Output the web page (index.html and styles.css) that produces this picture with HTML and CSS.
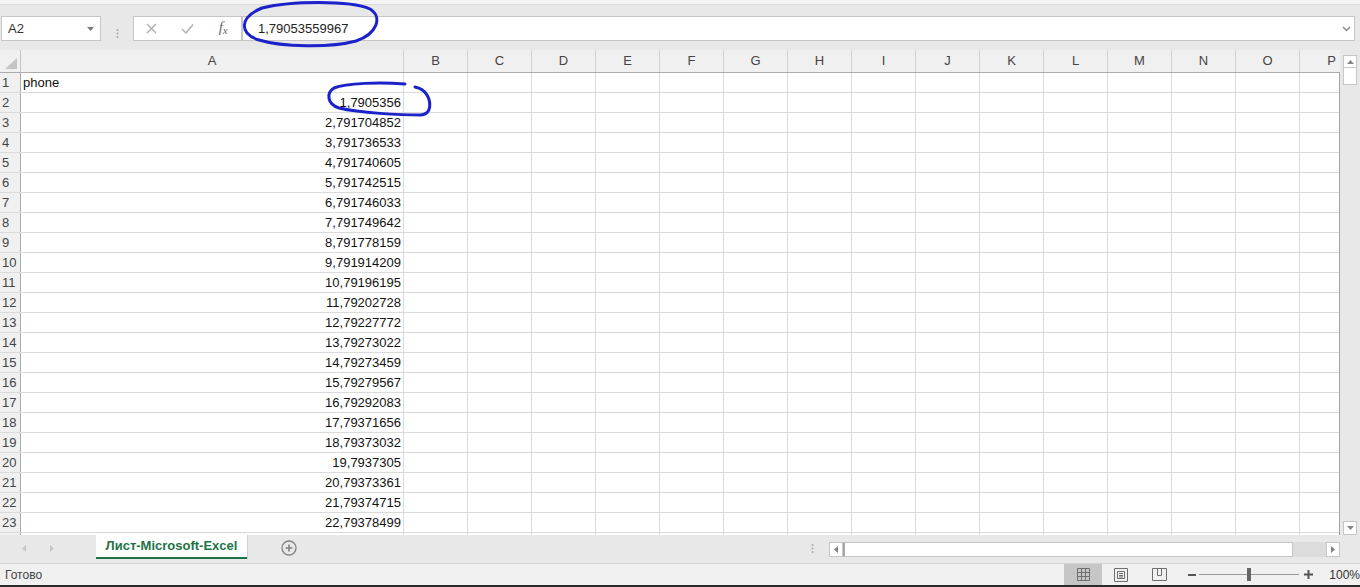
FILE: index.html
```html
<!DOCTYPE html>
<html>
<head>
  <meta charset="utf-8">
  <title>Лист-Microsoft-Excel</title>
  <link rel="stylesheet" href="styles.css">
</head>
<body>

<div class="app">
  <div class="ribbon-edge"></div>

  <div class="formula-bar">
    <div class="name-box">
      <span>A2</span>
      <svg width="7" height="4" viewBox="0 0 7 4"><polygon points="0,0 7,0 3.5,4" fill="#7a7a7a"/></svg>
    </div>
    <div class="fb-sep">
      <svg width="3" height="9" viewBox="0 0 3 9"><circle cx="1.5" cy="1" r="1" fill="#a9a9a9"/><circle cx="1.5" cy="4.5" r="1" fill="#a9a9a9"/><circle cx="1.5" cy="8" r="1" fill="#a9a9a9"/></svg>
    </div>
    <div class="fb-buttons">
      <div class="fb-btn">
        <svg width="11" height="11" viewBox="0 0 11 11"><path d="M1 1L10 10M10 1L1 10" stroke="#ababab" stroke-width="1.3"/></svg>
      </div>
      <div class="fb-btn">
        <svg width="13" height="11" viewBox="0 0 13 11"><path d="M1 6L5 10L12 1.5" stroke="#b4b4b4" stroke-width="1.6" fill="none"/></svg>
      </div>
      <div class="fb-btn fx">f<span>x</span></div>
    </div>
    <div class="fb-input">
      <span>1,79053559967</span>
      <svg width="9" height="6" viewBox="0 0 9 6"><path d="M1 1L4.5 4.5L8 1" stroke="#8a8a8a" stroke-width="1.5" fill="none"/></svg>
    </div>
  </div>

  <div class="sheet">
    <div class="grid">
      <div class="col-head">
        <div class="corner">
          <svg width="12" height="11" viewBox="0 0 12 11"><polygon points="12,0 12,11 0,11" fill="#c4c4c4"/></svg>
        </div>
        <div class="ch col-a">A</div>
        <div class="ch">B</div>
        <div class="ch">C</div>
        <div class="ch">D</div>
        <div class="ch">E</div>
        <div class="ch">F</div>
        <div class="ch">G</div>
        <div class="ch">H</div>
        <div class="ch">I</div>
        <div class="ch">J</div>
        <div class="ch">K</div>
        <div class="ch">L</div>
        <div class="ch">M</div>
        <div class="ch">N</div>
        <div class="ch">O</div>
        <div class="ch">P</div>
      </div>

      <div class="body">
        <div class="row"><div class="rh">1</div><div class="cell text">phone</div><div class="rest"></div></div>
        <div class="row"><div class="rh">2</div><div class="cell">1,7905356</div><div class="rest"></div></div>
        <div class="row"><div class="rh">3</div><div class="cell">2,791704852</div><div class="rest"></div></div>
        <div class="row"><div class="rh">4</div><div class="cell">3,791736533</div><div class="rest"></div></div>
        <div class="row"><div class="rh">5</div><div class="cell">4,791740605</div><div class="rest"></div></div>
        <div class="row"><div class="rh">6</div><div class="cell">5,791742515</div><div class="rest"></div></div>
        <div class="row"><div class="rh">7</div><div class="cell">6,791746033</div><div class="rest"></div></div>
        <div class="row"><div class="rh">8</div><div class="cell">7,791749642</div><div class="rest"></div></div>
        <div class="row"><div class="rh">9</div><div class="cell">8,791778159</div><div class="rest"></div></div>
        <div class="row"><div class="rh">10</div><div class="cell">9,791914209</div><div class="rest"></div></div>
        <div class="row"><div class="rh">11</div><div class="cell">10,79196195</div><div class="rest"></div></div>
        <div class="row"><div class="rh">12</div><div class="cell">11,79202728</div><div class="rest"></div></div>
        <div class="row"><div class="rh">13</div><div class="cell">12,79227772</div><div class="rest"></div></div>
        <div class="row"><div class="rh">14</div><div class="cell">13,79273022</div><div class="rest"></div></div>
        <div class="row"><div class="rh">15</div><div class="cell">14,79273459</div><div class="rest"></div></div>
        <div class="row"><div class="rh">16</div><div class="cell">15,79279567</div><div class="rest"></div></div>
        <div class="row"><div class="rh">17</div><div class="cell">16,79292083</div><div class="rest"></div></div>
        <div class="row"><div class="rh">18</div><div class="cell">17,79371656</div><div class="rest"></div></div>
        <div class="row"><div class="rh">19</div><div class="cell">18,79373032</div><div class="rest"></div></div>
        <div class="row"><div class="rh">20</div><div class="cell">19,7937305</div><div class="rest"></div></div>
        <div class="row"><div class="rh">21</div><div class="cell">20,79373361</div><div class="rest"></div></div>
        <div class="row"><div class="rh">22</div><div class="cell">21,79374715</div><div class="rest"></div></div>
        <div class="row"><div class="rh">23</div><div class="cell">22,79378499</div><div class="rest"></div></div>
        <div class="row"><div class="rh"></div><div class="cell"></div><div class="rest"></div></div>
      </div>
    </div>

    <div class="vscroll">
      <div class="sb-btn">
        <svg width="7" height="4" viewBox="0 0 7 4"><polygon points="0,4 7,4 3.5,0" fill="#858585"/></svg>
      </div>
      <div class="sb-thumb"></div>
      <div class="sb-btn down">
        <svg width="7" height="4" viewBox="0 0 7 4"><polygon points="0,0 7,0 3.5,4" fill="#858585"/></svg>
      </div>
    </div>
  </div>

  <div class="tabs">
    <div class="tab-nav">
      <svg width="4" height="7" viewBox="0 0 4 7"><polygon points="4,0 4,7 0,3.5" fill="#c8c8c8"/></svg>
      <svg width="4" height="7" viewBox="0 0 4 7"><polygon points="0,0 0,7 4,3.5" fill="#c8c8c8"/></svg>
    </div>
    <div class="tab active">Лист-Microsoft-Excel</div>
    <div class="tab-add">
      <svg width="16" height="16" viewBox="0 0 16 16"><circle cx="8" cy="8" r="7" stroke="#828282" stroke-width="1.3" fill="none"/><path d="M8 4.5V11.5M4.5 8H11.5" stroke="#828282" stroke-width="1.6"/></svg>
    </div>
    <div class="hs-grip">
      <svg width="3" height="9" viewBox="0 0 3 9"><circle cx="1.5" cy="1" r="1" fill="#a9a9a9"/><circle cx="1.5" cy="4.5" r="1" fill="#a9a9a9"/><circle cx="1.5" cy="8" r="1" fill="#a9a9a9"/></svg>
    </div>
    <div class="hscroll">
      <div class="hs-btn">
        <svg width="4" height="7" viewBox="0 0 4 7"><polygon points="4,0 4,7 0,3.5" fill="#808080"/></svg>
      </div>
      <div class="hs-thumb"></div>
      <div class="hs-track"></div>
      <div class="hs-btn">
        <svg width="4" height="7" viewBox="0 0 4 7"><polygon points="0,0 0,7 4,3.5" fill="#808080"/></svg>
      </div>
    </div>
  </div>

  <div class="status">
    <div class="status-text">Готово</div>
    <div class="views">
      <div class="view-btn current">
        <svg width="13" height="13" viewBox="0 0 13 13"><path d="M0.5 0.5H12.5V12.5H0.5ZM4.5 0.5V12.5M8.5 0.5V12.5M0.5 4.5H12.5M0.5 8.5H12.5" stroke="#6f6f6f" fill="none"/></svg>
      </div>
      <div class="view-btn">
        <svg width="14" height="14" viewBox="0 0 14 14"><path d="M0.5 0.5H13.5V13.5H0.5Z" stroke="#6f6f6f" fill="none"/><path d="M3.5 3.5H10.5V10.5H3.5Z" stroke="#6f6f6f" fill="none"/><path d="M5 5.5H9M5 7.5H9M5 9H9" stroke="#6f6f6f"/></svg>
      </div>
      <div class="view-btn">
        <svg width="15" height="13" viewBox="0 0 15 13"><path d="M0.5 0.5H14.5V12.5H0.5Z" stroke="#6f6f6f" fill="none"/><path d="M5.5 0.5V7.5H9.5V0.5" stroke="#6f6f6f" fill="none"/></svg>
      </div>
    </div>
    <div class="zoom">
      <div class="zoom-minus"></div>
      <div class="zoom-track"><div class="zoom-thumb"></div></div>
      <svg width="9" height="9" viewBox="0 0 9 9"><path d="M4.5 0V9M0 4.5H9" stroke="#555" stroke-width="2"/></svg>
      <span class="zoom-value">100%</span>
    </div>
  </div>

  <div class="taskbar-edge"></div>

  <svg class="marks" width="1360" height="587" viewBox="0 0 1360 587">
    <path d="M262 8C290 1 350 0 370 9C383 17 377 34 356 41C330 48 282 47 259 40C240 34 238 18 262 8Z" />
    <path d="M405 84C380 82 346 83 334 88C326 93 327 104 339 108C360 113 400 115 421 115C432 114 431 102 427 95C424 90 420 88 415 87" />
  </svg>
</div>

</body>
</html>
```

FILE: styles.css
```css
body {
  margin: 0;
  font-family: 'Liberation Sans', sans-serif;
  font-size: 13px;
  color: #222;
  background-color: #e8e8e8;
}

.app {
  position: relative;
  width: 1360px;
  height: 587px;
  overflow: hidden;
  background-color: #e8e8e8;
}

.ribbon-edge {
  height: 4px;
  background-color: #f4f4f4;
  border-bottom: 1px solid #dadada;
}

/* formula bar */

.formula-bar {
  display: flex;
  height: 45px;
  padding-top: 11px;
  box-sizing: border-box;
  padding-left: 1px;
}

.name-box, .fb-buttons, .fb-input {
  height: 25px;
  box-sizing: border-box;
  background-color: #fff;
  border: 1px solid #c6c6c6;
  display: flex;
  align-items: center;
}

.name-box {
  width: 100px;
  padding: 0 6px 0 6px;
  justify-content: space-between;
  color: #333;
}

.fb-sep {
  width: 32px;
  display: flex;
  align-items: center;
  justify-content: center;
}

.fb-buttons {
  width: 109px;
}

.fb-btn {
  width: 36px;
  display: flex;
  justify-content: center;
  align-items: center;
}

.fx {
  font-family: 'Liberation Serif', serif;
  font-style: italic;
  font-size: 15px;
  color: #6a6a6a;
  padding-bottom: 2px;
}

.fx span {
  font-size: 11px;
  margin-top: 4px;
}

.fb-input {
  width: 1113px;
  padding: 0 3px 0 15px;
  justify-content: space-between;
  color: #222;
}

/* grid */

.sheet {
  display: flex;
  height: 485px;
}

.grid {
  width: 1340px;
  overflow: hidden;
  background-color: #fff;
}

.col-head {
  display: flex;
  height: 23px;
  background-color: #f0f0f0;
  border-bottom: 1px solid #ababab;
  box-sizing: border-box;
}

.corner {
  width: 21px;
  flex-shrink: 0;
  box-sizing: border-box;
  border-right: 1px solid #c4c4c4;
  display: flex;
  align-items: flex-end;
  justify-content: flex-end;
  padding: 0 3px 3px 0;
}

.ch {
  width: 64px;
  flex-shrink: 0;
  box-sizing: border-box;
  border-right: 1px solid #d2d2d2;
  text-align: center;
  line-height: 22px;
  color: #444;
}

.ch.col-a {
  width: 383px;
}

.body {
  width: 1340px;
  height: 462px;
  box-sizing: border-box;
  border-right: 1px solid #a3a3a3;
  overflow: hidden;
}

.row {
  display: flex;
  height: 20px;
  box-sizing: border-box;
  border-bottom: 1px solid #dadada;
}

.rh {
  width: 21px;
  flex-shrink: 0;
  box-sizing: border-box;
  background-color: #f0f0f0;
  border-right: 1px solid #ababab;
  padding-left: 2px;
  line-height: 19px;
  color: #444;
}

.cell {
  width: 383px;
  flex-shrink: 0;
  box-sizing: border-box;
  border-right: 1px solid #dadada;
  padding: 0 2px;
  text-align: right;
  line-height: 19px;
  color: #111;
}

.cell.text {
  text-align: left;
}

.rest {
  width: 960px;
  flex-shrink: 0;
  background-image: repeating-linear-gradient(to right, transparent 0, transparent 63px, #dadada 63px, #dadada 64px);
}

/* scrollbars */

.vscroll {
  width: 20px;
  display: flex;
  flex-direction: column;
  align-items: center;
  padding-top: 5px;
  box-sizing: border-box;
}

.sb-btn {
  width: 14px;
  height: 13px;
  box-sizing: border-box;
  background-color: #fff;
  border: 1px solid #c6c6c6;
  display: flex;
  align-items: center;
  justify-content: center;
}

.sb-btn.down {
  margin-top: auto;
  height: 14px;
}

.sb-thumb {
  width: 14px;
  height: 17px;
  box-sizing: border-box;
  background-color: #fff;
  border: 1px solid #c6c6c6;
  border-top: none;
}

/* sheet tabs */

.tabs {
  display: flex;
  height: 28px;
  align-items: flex-start;
}

.tab-nav {
  width: 96px;
  height: 26px;
  display: flex;
  align-items: center;
  padding-left: 22px;
  gap: 24px;
  box-sizing: border-box;
}

.tab {
  height: 24px;
  box-sizing: border-box;
  padding: 0 11px;
  line-height: 22px;
}

.tab.active {
  width: 151px;
  background-color: #fff;
  border-bottom: 2px solid #217346;
  color: #217346;
  font-weight: bold;
  text-align: center;
  padding: 0;
  box-shadow: 1px 0 0 #cfcfcf;
}

.tab-add {
  width: 84px;
  height: 26px;
  display: flex;
  align-items: center;
  padding-left: 34px;
  box-sizing: border-box;
}

.hs-grip {
  margin-left: 480px;
  width: 18px;
  height: 26px;
  display: flex;
  align-items: center;
}

.hscroll {
  display: flex;
  width: 511px;
  height: 15px;
  margin-top: 7px;
}

.hs-btn {
  width: 14px;
  height: 15px;
  box-sizing: border-box;
  background-color: #fff;
  border: 1px solid #c6c6c6;
  display: flex;
  align-items: center;
  justify-content: center;
}

.hs-thumb {
  width: 450px;
  box-sizing: border-box;
  background-color: #fff;
  border: 1px solid #c6c6c6;
  border-left: 2px solid #a8a8a8;
}

.hs-track {
  width: 33px;
  background-color: #dcdcdc;
}

/* status bar */

.status {
  display: flex;
  align-items: center;
  height: 22px;
  background-color: #f0f0f0;
  border-top: 1px solid #d4d4d4;
  box-sizing: border-box;
  font-size: 12px;
  color: #444;
}

.status-text {
  padding-left: 5px;
  width: 1064px;
}

.views {
  display: flex;
  height: 21px;
}

.view-btn {
  width: 38px;
  display: flex;
  align-items: center;
  justify-content: center;
}

.view-btn.current {
  background-color: #c6c6c6;
}

.zoom {
  display: flex;
  align-items: center;
  padding-left: 10px;
  gap: 3px;
}

.zoom-minus {
  width: 8px;
  height: 2px;
  background-color: #555;
}

.zoom-track {
  position: relative;
  width: 100px;
  height: 1px;
  background-color: #9a9a9a;
  margin-right: 2px;
}

.zoom-thumb {
  position: absolute;
  left: 48px;
  top: -6px;
  width: 4px;
  height: 13px;
  background-color: #666;
}

.zoom-value {
  margin-left: 13px;
  color: #333;
}

.taskbar-edge {
  height: 2px;
  background-color: #2b2b2b;
}

/* hand-drawn marks over the screenshot */

.marks {
  position: absolute;
  left: 0;
  top: 0;
  pointer-events: none;
  fill: none;
  stroke: #1b22c9;
  stroke-width: 3;
  stroke-linecap: round;
}
```
